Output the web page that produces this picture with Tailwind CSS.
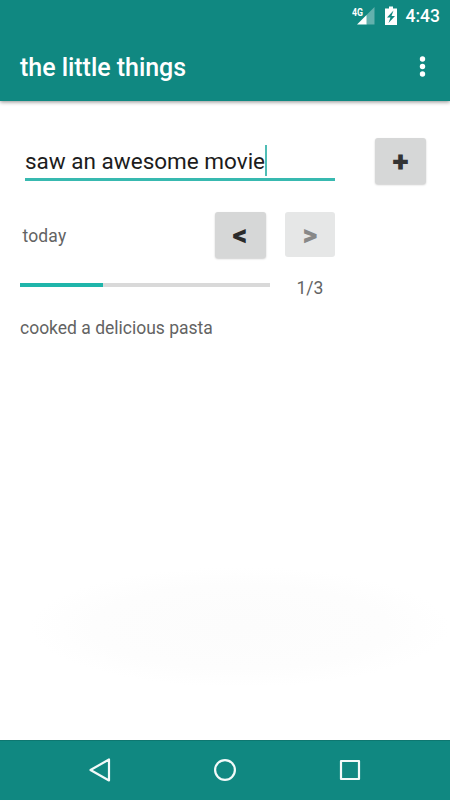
<!DOCTYPE html>
<html lang="en">
<head>
  <meta charset="UTF-8">
  <meta name="viewport" content="width=device-width, initial-scale=1.0">
  <title>the little things</title>
  <script src="https://cdn.jsdelivr.net/npm/@tailwindcss/browser@4"></script>
</head>
<body class="bg-white font-[Roboto,sans-serif]">
  <div class="w-[450px] h-[800px] flex flex-col overflow-hidden">
    <!-- Header -->
    <header class="relative h-[101px] shrink-0 bg-[#108881] text-white shadow-[0_1px_4px_rgba(0,0,0,0.45)]">
      <!-- Status bar -->
      <div class="h-8 flex items-center justify-end pr-[10px]">
        <svg class="w-6 h-5" viewBox="0 0 24 20">
          <path d="M22.500 1V18.500H14V9.500Z" fill="#fff" fill-opacity=".35" />
          <path d="M14.500 9V18.500H5Z" fill="#fff" />
          <text x="0" y="9.500" font-size="10.500" font-weight="700" fill="#fff" textLength="11" lengthAdjust="spacingAndGlyphs">4G</text>
        </svg>
        <svg class="w-3 h-5 ml-[9px] mr-[9px]" viewBox="0 0 12 20">
          <path d="M4 .500h4v2h4v16.500H0V2.500H4Z" fill="#fff" />
          <path d="M8.500 4.500 2 11.500H5.500L3.500 17 10 10H6.500Z" fill="#108881" />
        </svg>
        <span class="text-[17.5px] font-medium">4:43</span>
      </div>
      <div class="h-[69px] flex items-center justify-between pl-5 pr-[25px]">
        <h1 class="pt-[3px] text-[25px] tracking-[-0.04px] font-medium">the little things</h1>
        <svg class="w-[5px] h-5 overflow-visible" viewBox="0 0 5 20" fill="#fff">
          <circle cx="2.500" cy="2" r="2.700" />
          <circle cx="2.500" cy="9.500" r="2.700" />
          <circle cx="2.500" cy="17" r="2.700" />
        </svg>
      </div>
    </header>

    <main class="flex-1 pl-5 pr-6 pt-[37px] bg-[radial-gradient(ellipse_210px_60px_at_240px_526px,#fcfcfc,#fdfdfd_70%,#ffffff)]">
      <!-- New entry -->
      <div class="flex justify-between pl-[5px]">
        <div class="w-[310px] h-[43px] pt-[7px] flex items-start border-b-[3px] border-[#38b9b0]">
          <span class="text-[22.5px] leading-8 text-[#1c1c1c]">saw an awesome movie</span>
          <span class="w-0.5 h-[31px] bg-[#4fbdb5]"></span>
        </div>
        <button class="w-[51px] h-[46px] pt-px rounded-[3px] bg-[#d6d7d7] shadow-[0_1px_2px_rgba(0,0,0,0.2)] text-[30px] leading-[44px] font-black text-[#333333]">+</button>
      </div>

      <!-- Day picker -->
      <div class="flex items-start mt-7">
        <span class="w-[194.5px] pl-[2.5px] pt-3 text-[17.5px] leading-6 tracking-[0.15px] text-[#636363]">today</span>
        <button class="w-[51px] h-[46px] rounded-[3px] bg-[#d6d7d7] shadow-[0_1px_2px_rgba(0,0,0,0.2)] text-[29px] leading-[44px] font-black text-[#2b2b2b]">&lt;</button>
        <button class="w-[50px] h-[45px] ml-[19.5px] rounded-[3px] bg-[#e6e7e7] text-[29px] leading-[44px] font-black text-[#888888]">&gt;</button>
      </div>

      <!-- Progress -->
      <div class="flex items-start mt-[17px]">
        <div class="w-[250px] h-1 mt-[7.5px] bg-[#d9d9d9]">
          <div class="h-full bg-[#1fb5aa]" style="width: 33.3%"></div>
        </div>
        <span class="ml-[26.5px] pt-px text-[17.5px] leading-6 text-[#636363]">1/3</span>
      </div>

      <p class="mt-4 text-[17.5px] leading-6 text-[#636363]">cooked a delicious pasta</p>
    </main>

    <!-- Navigation bar -->
    <nav class="h-[60px] shrink-0 bg-[#108881] shadow-[inset_0_1px_0_#0e7770] flex items-center justify-between px-[88px]">
      <svg class="w-6 h-6" viewBox="0 0 24 24" fill="none" stroke="#f2faf9" stroke-width="2.200" stroke-linejoin="round">
        <path d="M21 1.500V22.500L2.500 12Z" />
      </svg>
      <svg class="w-6 h-6" viewBox="0 0 24 24" fill="none" stroke="#f2faf9" stroke-width="2.200">
        <circle cx="12" cy="12" r="9.900" />
      </svg>
      <svg class="w-6 h-6" viewBox="0 0 24 24" fill="none" stroke="#f2faf9" stroke-width="2.200" stroke-linejoin="round">
        <rect x="3" y="3" width="18" height="18" />
      </svg>
    </nav>
  </div>
</body>
</html>
